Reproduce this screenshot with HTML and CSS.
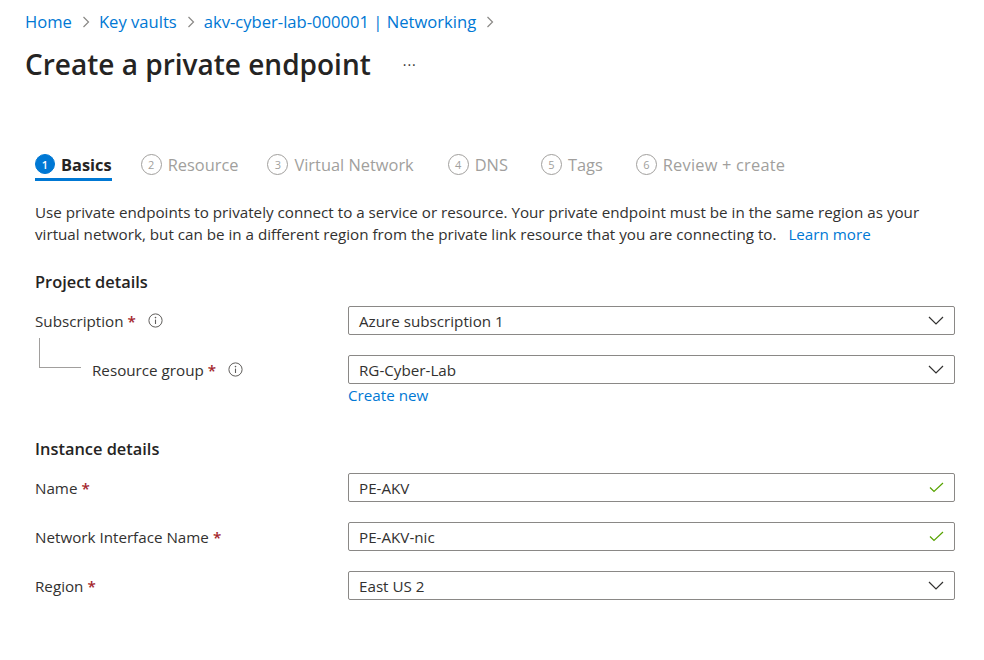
FILE: index.html
```html
<!DOCTYPE html>
<html>
<head>
<meta charset="utf-8">
<link rel="stylesheet" href="styles.css">
</head>
<body>
<div class="page">
  <nav class="breadcrumb">
    <a class="crumb">Home</a><span class="sep"><svg width="8" height="12" viewBox="0 0 8 12"><path d="M1.5 1 L6.5 6 L1.5 11" fill="none" stroke="#8a8886" stroke-width="1.2"/></svg></span>
    <a class="crumb">Key vaults</a><span class="sep"><svg width="8" height="12" viewBox="0 0 8 12"><path d="M1.5 1 L6.5 6 L1.5 11" fill="none" stroke="#8a8886" stroke-width="1.2"/></svg></span>
    <a class="crumb">akv-cyber-lab-000001 | Networking</a><span class="sep"><svg width="8" height="12" viewBox="0 0 8 12"><path d="M1.5 1 L6.5 6 L1.5 11" fill="none" stroke="#8a8886" stroke-width="1.2"/></svg></span>
  </nav>
  <div class="title-row">
    <h1 class="title">Create a private endpoint</h1>
    <span class="more">···</span>
  </div>

  <div class="content">
    <div class="tabs">
      <div class="tab active t1"><span class="num">1</span><span class="tab-label">Basics</span></div>
      <div class="tab t2"><span class="num">2</span><span class="tab-label">Resource</span></div>
      <div class="tab t3"><span class="num">3</span><span class="tab-label">Virtual Network</span></div>
      <div class="tab t4"><span class="num">4</span><span class="tab-label">DNS</span></div>
      <div class="tab t5"><span class="num">5</span><span class="tab-label">Tags</span></div>
      <div class="tab t6"><span class="num">6</span><span class="tab-label">Review + create</span></div>
    </div>

    <p class="desc">Use private endpoints to privately connect to a service or resource. Your private endpoint must be in the same region as your virtual network, but can be in a different region from the private link resource that you are connecting to. <a class="link learn">Learn more</a></p>

    <h2 class="section">Project details</h2>

    <div class="row first">
      <div class="label">Subscription <span class="req">*</span><span class="info"><svg width="15" height="15" viewBox="0 0 15 15"><circle cx="7.5" cy="7.5" r="6.6" fill="none" stroke="#605e5c" stroke-width="1"/><circle cx="7.5" cy="4.6" r="0.8" fill="#605e5c"/><path d="M7.5 6.6 V11" stroke="#605e5c" stroke-width="1.1"/></svg></span></div>
      <div class="field select"><span class="value">Azure subscription 1</span><svg class="chev" width="16" height="9" viewBox="0 0 16 9"><path d="M1 1 L8 8 L15 1" fill="none" stroke="#323130" stroke-width="1.2"/></svg></div>
    </div>

    <div class="row">
      <div class="label"><span class="tree"></span>Resource group <span class="req">*</span><span class="info"><svg width="15" height="15" viewBox="0 0 15 15"><circle cx="7.5" cy="7.5" r="6.6" fill="none" stroke="#605e5c" stroke-width="1"/><circle cx="7.5" cy="4.6" r="0.8" fill="#605e5c"/><path d="M7.5 6.6 V11" stroke="#605e5c" stroke-width="1.1"/></svg></span></div>
      <div class="field-col">
        <div class="field select"><span class="value">RG-Cyber-Lab</span><svg class="chev" width="16" height="9" viewBox="0 0 16 9"><path d="M1 1 L8 8 L15 1" fill="none" stroke="#323130" stroke-width="1.2"/></svg></div>
        <a class="link create">Create new</a>
      </div>
    </div>

    <h2 class="section instance">Instance details</h2>

    <div class="row first">
      <div class="label">Name <span class="req">*</span></div>
      <div class="field"><span class="value">PE-AKV</span><svg class="check" width="15" height="11" viewBox="0 0 15 11"><path d="M1 5.5 L5 9.5 L14 1" fill="none" stroke="#57a300" stroke-width="1.2"/></svg></div>
    </div>
    <div class="row">
      <div class="label">Network Interface Name <span class="req">*</span></div>
      <div class="field"><span class="value">PE-AKV-nic</span><svg class="check" width="15" height="11" viewBox="0 0 15 11"><path d="M1 5.5 L5 9.5 L14 1" fill="none" stroke="#57a300" stroke-width="1.2"/></svg></div>
    </div>
    <div class="row">
      <div class="label">Region <span class="req">*</span></div>
      <div class="field select"><span class="value">East US 2</span><svg class="chev" width="16" height="9" viewBox="0 0 16 9"><path d="M1 1 L8 8 L15 1" fill="none" stroke="#323130" stroke-width="1.2"/></svg></div>
    </div>
  </div>
</div>
</body>
</html>
```
FILE: styles.css
```css
* { box-sizing: border-box; }
html, body { margin: 0; padding: 0; background: #ffffff; }
body {
  font-family: "Open Sans", "Noto Sans", "Liberation Sans", sans-serif;
  color: #323130;
  font-size: 15.2px;
}
.page { padding-top: 11px; }
.breadcrumb {
  padding-left: 25px;
  height: 22px;
  line-height: 22px;
  font-size: 16.6px;
  display: flex;
  align-items: center;
}
.crumb { color: #0078d4; text-decoration: none; }
.sep { display: inline-flex; align-items: center; margin: 0 9px 0 10px; }
.title-row {
  display: flex;
  align-items: center;
  padding-left: 25px;
  margin-top: 13px;
  height: 36px;
}
.title {
  margin: 0;
  font-size: 28px;
  font-weight: 600;
  color: #252423;
  line-height: 36px;
}
.more { margin-left: 32px; font-size: 14px; color: #323130; letter-spacing: 1px; }
.content { padding-left: 35px; width: 955px; }
.tabs {
  display: flex;
  margin-top: 68px;
  height: 33px;
}
.tab {
  display: flex;
  align-items: center;
  height: 28px;
  margin-right: 30px;
  color: #a19f9d;
  font-size: 16.4px;
}
.tab.t1 { margin-right: 29px; }
.tab.t2 { margin-right: 29px; }
.tab.t3 { margin-right: 34px; }
.tab.t4 { margin-right: 33px; }
.tab.t5 { margin-right: 33px; }
.tab.t6 { letter-spacing: 0.2px; }
.tab.active {
  color: #252423;
  font-weight: 700;
  border-bottom: 3px solid #0078d4;
  height: 31px;
}
.num {
  width: 21px;
  height: 21px;
  border-radius: 50%;
  border: 1px solid #a19f9d;
  display: inline-flex;
  align-items: center;
  justify-content: center;
  font-size: 11px;
  font-weight: 400;
  margin-right: 6px;
  line-height: 1;
  letter-spacing: 0;
}
.tab.active .num { width: 20px; height: 20px; background: #0078d4; border-color: #0078d4; color: #fff; font-weight: 600; }
.desc {
  margin: 18px 0 0;
  line-height: 22px;
  font-size: 15.2px;
  color: #323130;
}
.link { color: #0078d4; text-decoration: none; }
.learn { margin-left: 8px; }
.section {
  margin: 26px 0 0;
  font-size: 16.4px;
  font-weight: 600;
  line-height: 22px;
  color: #252423;
}
.section.instance { margin-top: 33px; }
.row {
  display: flex;
  align-items: flex-start;
  margin-top: 20px;
}
.row.first { margin-top: 13px; }
.label {
  width: 313px;
  flex: none;
  display: flex;
  align-items: center;
  height: 29px;
  font-size: 15.2px;
}
.req { color: #a4262c; margin-left: 4px; font-weight: 600; }
.info { display: inline-flex; margin-left: 12px; }
.tree {
  align-self: flex-start;
  width: 42px;
  height: 30px;
  margin-top: -17px;
  margin-left: 4px;
  margin-right: 11px;
  border-left: 1px solid #a19f9d;
  border-bottom: 1px solid #a19f9d;
  flex: none;
}
.field-col { display: flex; flex-direction: column; }
.field {
  width: 607px;
  height: 29px;
  border: 1px solid #8a8886;
  border-radius: 2px;
  display: flex;
  align-items: center;
  justify-content: space-between;
  padding: 0 10px 0 10px;
  font-size: 15.2px;
}
.create { margin-top: 1px; line-height: 20px; font-size: 15.2px; }
```
